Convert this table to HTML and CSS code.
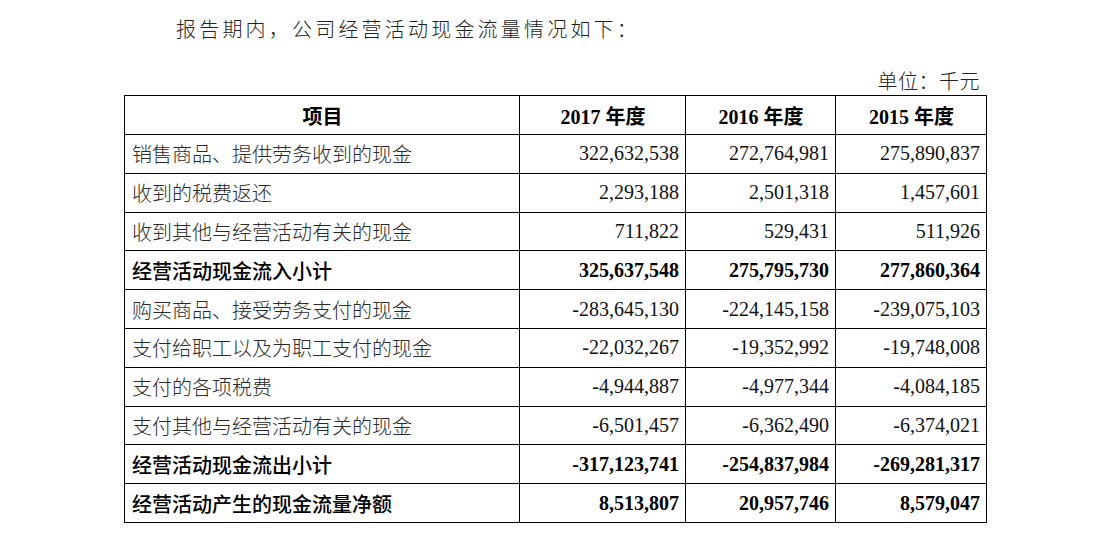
FILE: index.html
```html
<!DOCTYPE html>
<html lang="zh-CN">
<head>
<meta charset="utf-8">
<link rel="stylesheet" href="styles.css">
</head>
<body>
<div class="page">
  <p class="intro">报告期内，公司经营活动现金流量情况如下：</p>
  <div class="unit">单位：千元</div>
  <table class="cf">
    <colgroup>
      <col class="c-label"><col class="c-num"><col class="c-num2"><col class="c-num3">
    </colgroup>
    <thead>
      <tr class="head">
        <th class="hl">项目</th>
        <th><span class="yr">2017</span> 年度</th>
        <th><span class="yr">2016</span> 年度</th>
        <th><span class="yr">2015</span> 年度</th>
      </tr>
    </thead>
    <tbody>
      <tr><td class="lbl">销售商品、提供劳务收到的现金</td><td class="n">322,632,538</td><td class="n">272,764,981</td><td class="n">275,890,837</td></tr>
      <tr><td class="lbl">收到的税费返还</td><td class="n">2,293,188</td><td class="n">2,501,318</td><td class="n">1,457,601</td></tr>
      <tr><td class="lbl">收到其他与经营活动有关的现金</td><td class="n">711,822</td><td class="n">529,431</td><td class="n">511,926</td></tr>
      <tr class="sum"><td class="lbl">经营活动现金流入小计</td><td class="n">325,637,548</td><td class="n">275,795,730</td><td class="n">277,860,364</td></tr>
      <tr><td class="lbl">购买商品、接受劳务支付的现金</td><td class="n">-283,645,130</td><td class="n">-224,145,158</td><td class="n">-239,075,103</td></tr>
      <tr><td class="lbl">支付给职工以及为职工支付的现金</td><td class="n">-22,032,267</td><td class="n">-19,352,992</td><td class="n">-19,748,008</td></tr>
      <tr><td class="lbl">支付的各项税费</td><td class="n">-4,944,887</td><td class="n">-4,977,344</td><td class="n">-4,084,185</td></tr>
      <tr><td class="lbl">支付其他与经营活动有关的现金</td><td class="n">-6,501,457</td><td class="n">-6,362,490</td><td class="n">-6,374,021</td></tr>
      <tr class="sum"><td class="lbl">经营活动现金流出小计</td><td class="n">-317,123,741</td><td class="n">-254,837,984</td><td class="n">-269,281,317</td></tr>
      <tr class="sum"><td class="lbl">经营活动产生的现金流量净额</td><td class="n">8,513,807</td><td class="n">20,957,746</td><td class="n">8,579,047</td></tr>
    </tbody>
  </table>
</div>
</body>
</html>
```
FILE: styles.css
```css
html, body {
  margin: 0;
  padding: 0;
  background: #fff;
}
body {
  font-family: "Liberation Serif", "Noto Sans CJK SC", serif;
  color: #222;
}
.page {
  width: 1115px;
  padding-top: 14px;
}
.intro {
  margin: 0;
  padding-left: 176px;
  font-family: "Liberation Serif", "Noto Sans CJK SC", serif;
  font-weight: 300;
  font-size: 20px;
  line-height: 32px;
  letter-spacing: 3.2px;
  color: #222;
}
.unit {
  margin-top: 23px;
  width: 980px;
  text-align: right;
  font-weight: 300;
  font-size: 20px;
  line-height: 26px;
  letter-spacing: 0.5px;
  color: #222;
}
.cf {
  margin-left: 124px;
  margin-top: 0;
  border-collapse: collapse;
  table-layout: fixed;
  width: 862px;
}
.c-label { width: 395px; }
.c-num { width: 166px; }
.c-num2 { width: 150px; }
.c-num3 { width: 151px; }
.cf th, .cf td {
  border: 1px solid #000;
  padding: 0 6px 0 7px;
  font-size: 20px;
  white-space: nowrap;
}
.cf tr { height: 38.8px; }
.cf tr.head { height: 39px; }
.cf th {
  font-family: "Liberation Serif", "Noto Sans CJK SC", serif;
  font-weight: 700;
  color: #000;
  text-align: center;
}
.lbl {
  font-family: "Noto Sans CJK SC", sans-serif;
  font-weight: 300;
  color: #2a2a2a;
  text-align: left;
}
.n {
  font-family: "Liberation Serif", serif;
  text-align: right;
  color: #111;
}
.sum .lbl {
  font-weight: 500;
  color: #000;
}
.sum .n {
  font-weight: 700;
  color: #000;
}
```
